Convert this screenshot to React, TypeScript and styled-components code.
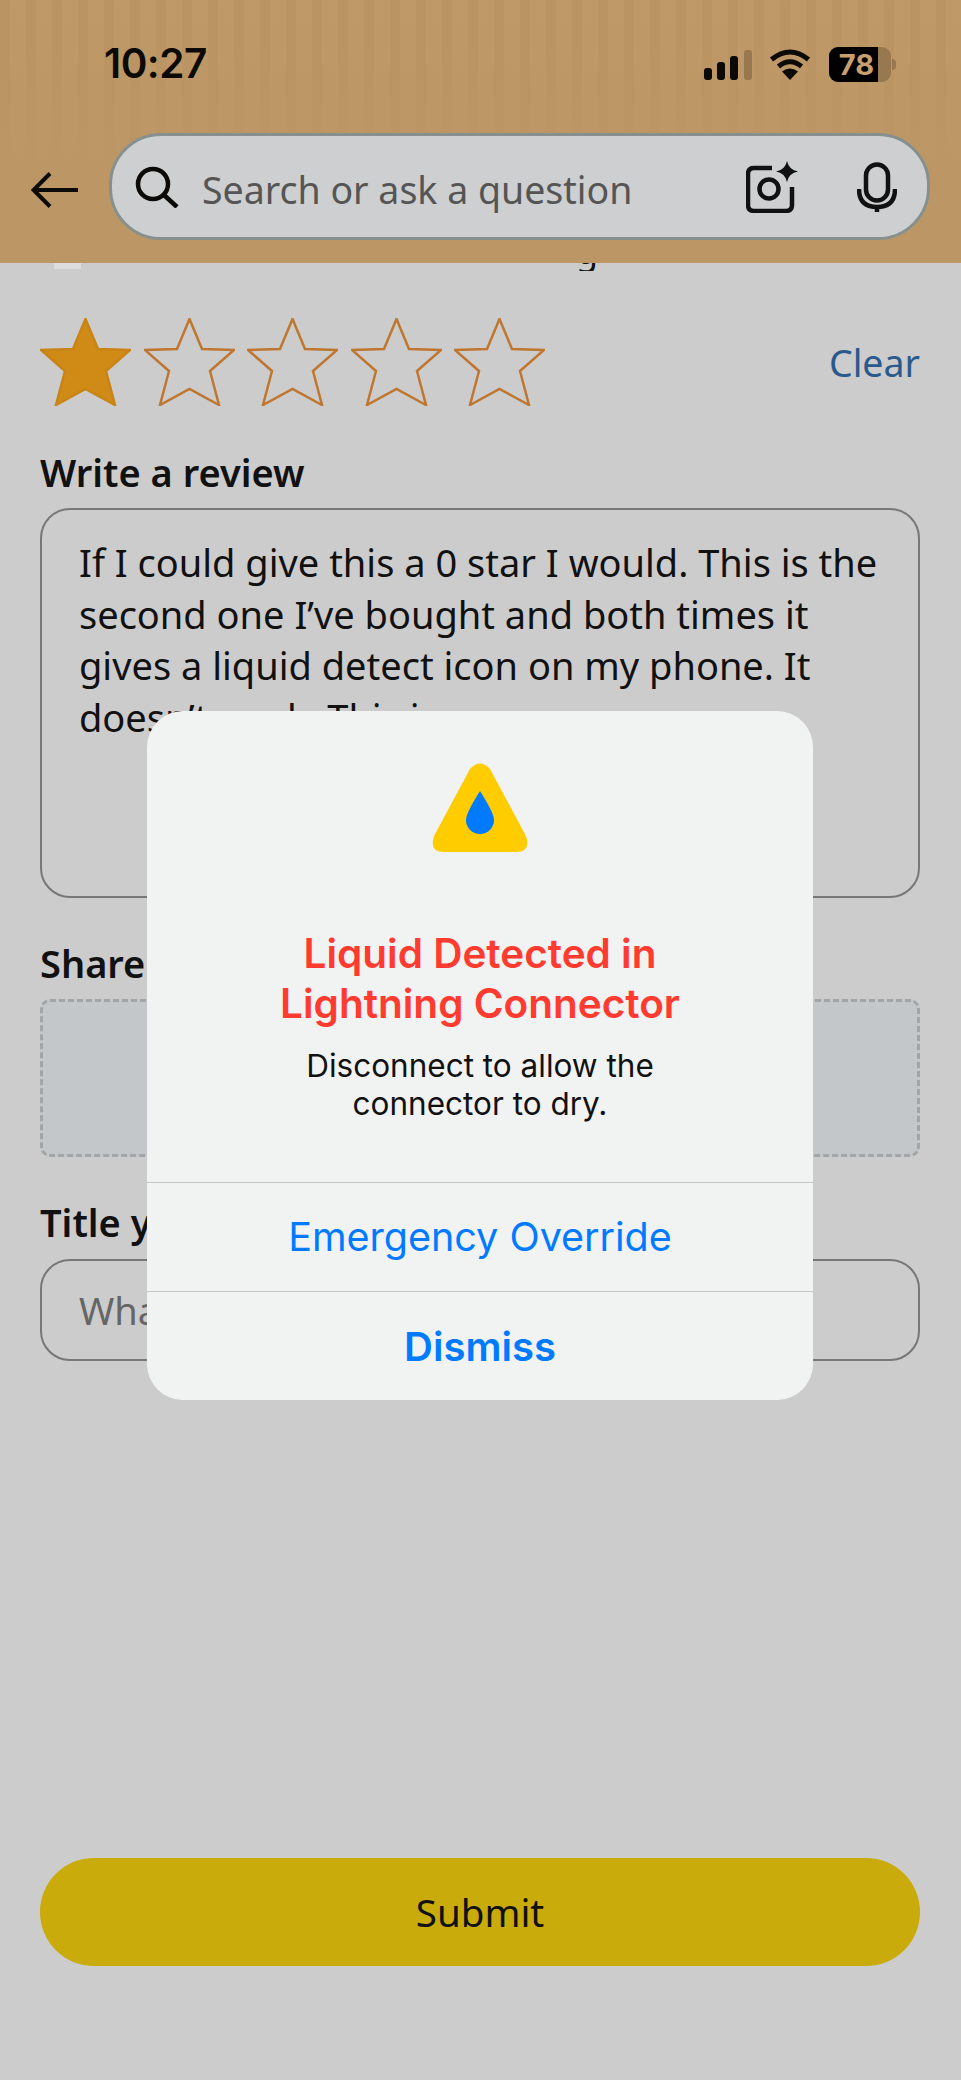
import styled, { createGlobalStyle } from 'styled-components';

const GlobalStyle = createGlobalStyle`
  html, body {
    margin: 0;
    padding: 0;
    background: #cccccc;
  }
  * {
    box-sizing: border-box;
  }
`;

const Page = styled.div`
  position: relative;
  width: 961px;
  height: 2080px;
  overflow: hidden;
  background: #cccccc;
  color: #111;
  font-family: 'Noto Sans', 'Liberation Sans', sans-serif;
`;

const Header = styled.header`
  height: 263px;
  background:
    linear-gradient(to bottom, rgba(189, 150, 101, 0.45) 0, #bd9665 170px),
    repeating-linear-gradient(90deg, #b8915f 0 10px, #c29b6b 10px 26px);
`;

const StatusBar = styled.div`
  height: 133px;
  padding: 40px 65px 0 104px;
  display: flex;
  justify-content: space-between;
  align-items: flex-start;
`;

const Time = styled.div`
  font-family: Inter, 'Liberation Sans', sans-serif;
  font-size: 40.500px;
  font-weight: 600;
  line-height: 48px;
  letter-spacing: -0.5px;
  color: #0c0a06;
`;

const StatusIcons = styled.div`
  display: flex;
  align-items: center;
  gap: 17px;
  padding-top: 7px;
`;

const Battery = styled.div`
  display: flex;
  align-items: stretch;
  width: 62px;
  height: 35px;
  border-radius: 9px;
  overflow: hidden;
  background: #98794f;
  position: relative;
`;

const BatteryFill = styled.div`
  width: 49px;
  background: #000;
  color: #c8a070;
  font-family: Inter, 'Liberation Sans', sans-serif;
  font-size: 29px;
  font-weight: 700;
  line-height: 35px;
  text-align: center;
  padding-left: 6px;
  white-space: nowrap;
`;

const BatteryTip = styled.div`
  width: 4px;
  height: 11px;
  margin-left: 1px;
  border-radius: 0 4px 4px 0;
  background: #98794f;
`;

const BatteryWrap = styled.div`
  display: flex;
  align-items: center;
  margin-left: 1px;
`;

const SearchRow = styled.div`
  display: flex;
  align-items: center;
  height: 107px;
  padding-left: 31px;
  gap: 31px;
`;

const BackSlot = styled.div`
  display: flex;
  padding-top: 6px;
`;

const SearchBox = styled.div`
  width: 821px;
  height: 107px;
  display: flex;
  align-items: center;
  border: 3px solid #86908f;
  border-radius: 52px;
  background: #cdcfd0;
  padding: 0 30px 0 23px;
`;

const Placeholder = styled.div`
  flex: 1;
  margin-left: 23px;
  padding-top: 6px;
  font-size: 37.500px;
  color: #555;
  white-space: nowrap;
`;

const CameraSlot = styled.div`
  margin-right: 59px;
  display: flex;
`;

const Content = styled.main`
  padding: 0 41px 0 40px;
`;

const Peek = styled.div`
  height: 8px;
  overflow: hidden;
  display: flex;
  padding-left: 14px;
`;

const PeekIcon = styled.div`
  width: 27px;
  height: 6px;
  background: #dcdcdc;
`;

const PeekLetter = styled.div`
  margin-left: 495px;
  margin-top: -32px;
  font-size: 36px;
  line-height: 40px;
`;

const RatingRow = styled.div`
  margin-top: 47px;
  height: 88px;
  display: flex;
  justify-content: space-between;
  align-items: flex-start;
`;

const Stars = styled.div`
  display: flex;
  gap: 12.500px;
`;

const ClearLink = styled.div`
  margin-top: 20px;
  font-size: 37.500px;
  line-height: 50px;
  color: #2a5a8c;
`;

const Label = styled.div`
  font-size: 38px;
  font-weight: 600;
  line-height: 50px;
  color: #111;
`;

const ReviewLabel = styled(Label)`
  margin-top: 41px;
`;

const ReviewBox = styled.div`
  margin-top: 11px;
  height: 390px;
  border: 2px solid #777;
  border-radius: 30px;
  padding: 27px 20px 0 37px;
  font-size: 38px;
  line-height: 51.700px;
  color: #111;
  white-space: nowrap;
`;

const ShareLabel = styled(Label)`
  margin-top: 40px;
`;

const DropZone = styled.div`
  margin-top: 11px;
  height: 158px;
  border: 3px dashed #a3a6a8;
  border-radius: 10px;
  background: #c3c7c9;
`;

const TitleLabel = styled(Label)`
  margin-top: 40px;
`;

const TitleInput = styled.div`
  margin-top: 12px;
  height: 102px;
  border: 2px solid #777;
  border-radius: 30px;
  padding-left: 37px;
  display: flex;
  align-items: center;
  font-size: 38px;
  color: #666;
`;

const SubmitButton = styled.div`
  margin-top: 497px;
  height: 108px;
  border-radius: 54px;
  background: #c9ab0c;
  display: flex;
  align-items: center;
  justify-content: center;
  font-size: 38.500px;
  color: #111;
`;

const Alert = styled.div`
  position: absolute;
  left: 147px;
  top: 711px;
  width: 666px;
  height: 689px;
  border-radius: 36px;
  background: #f1f2f2;
  font-family: Inter, 'Liberation Sans', sans-serif;
  text-align: center;
  display: flex;
  flex-direction: column;
  overflow: hidden;
`;

const AlertBody = styled.div`
  height: 471px;
  display: flex;
  flex-direction: column;
  align-items: center;
  padding-top: 52px;
`;

const AlertTitle = styled.div`
  margin-top: 76px;
  font-size: 40.500px;
  font-weight: 600;
  line-height: 50px;
  color: #ff3b30;
`;

const AlertMessage = styled.div`
  margin-top: 18px;
  font-size: 31.500px;
  line-height: 38px;
  color: #111;
`;

const AlertAction = styled.div<{ $bold?: boolean }>`
  flex: 1;
  display: flex;
  align-items: center;
  justify-content: center;
  border-top: 1.500px solid #c6c6c8;
  font-size: ${props => (props.$bold ? 40 : 39.500)}px;
  font-weight: ${props => (props.$bold ? 600 : 400)};
  color: #007aff;
`;

function Star({ filled }: { filled?: boolean }) {
  return (
    <svg width="91" height="88" viewBox="0 0 91 88">
      <polygon
        points="45.500,1 58,31 90,32 66,53 75,87 45.500,71 16,87 25,53 1,32 33,31"
        fill={filled ? '#d08a16' : 'none'}
        stroke={filled ? '#c98417' : '#bf7730'}
        strokeWidth="2.500"
      />
    </svg>
  );
}

function Signal() {
  return (
    <svg width="48" height="30" viewBox="0 0 48 30">
      <rect x="0" y="18" width="8" height="12" rx="3" fill="#0c0a06" />
      <rect x="13" y="12" width="8" height="18" rx="3" fill="#0c0a06" />
      <rect x="26" y="6" width="8" height="24" rx="3" fill="#0c0a06" />
      <rect x="40" y="0" width="8" height="30" rx="3" fill="#98794f" />
    </svg>
  );
}

function Wifi() {
  return (
    <svg width="42" height="31" viewBox="0 0 42 31" fill="none">
      <path d="M2.500 10.500 Q21 -4.500 39.500 10.500" stroke="#0c0a06" strokeWidth="5" />
      <path d="M9.500 17.500 Q21 8 32.500 17.500" stroke="#0c0a06" strokeWidth="5" />
      <path d="M21 31 L13 22.500 Q21 16.500 29 22.500 Z" fill="#0c0a06" />
    </svg>
  );
}

function BackArrow() {
  return (
    <svg width="47" height="36" viewBox="0 0 47 36" fill="none" stroke="#0c0a06" strokeWidth="4">
      <path d="M47 18 H3" />
      <path d="M19 1.500 L2.500 18 L19 34.500" />
    </svg>
  );
}

function SearchIcon() {
  return (
    <svg width="44" height="42" viewBox="0 0 44 42" fill="none" stroke="#0c0a06" strokeWidth="4.500">
      <circle cx="18" cy="18" r="15" />
      <path d="M29 29 L42 41" />
    </svg>
  );
}

function CameraIcon() {
  return (
    <svg width="52" height="52" viewBox="0 0 52 52" fill="none">
      <path
        d="M26 7 H8 Q2 7 2 13 V44 Q2 50 8 50 H40 Q46 50 46 44 V26"
        stroke="#111"
        strokeWidth="4.500"
      />
      <circle cx="23" cy="28" r="9.500" stroke="#111" strokeWidth="4.500" />
      <path d="M41 0 Q43 9 52 10.500 Q43 12 41 21 Q39 12 30 10.500 Q39 9 41 0 Z" fill="#111" />
    </svg>
  );
}

function MicIcon() {
  return (
    <svg width="40" height="50" viewBox="0 0 40 50" fill="none" stroke="#111" strokeWidth="4.500">
      <rect x="9" y="2.500" width="22" height="36" rx="11" />
      <path d="M2 27 Q2 45 20 45 Q38 45 38 27" />
      <path d="M20 45 V50" />
    </svg>
  );
}

function LiquidIcon() {
  return (
    <svg width="96" height="90" viewBox="0 0 96 90">
      <path
        d="M38 6 Q48 -5 58 6 L94 73 Q99 89 84 89 H12 Q-3 89 2 73 Z"
        fill="#ffcc00"
      />
      <path d="M48 28 Q62 50 62 57 A14 14 0 0 1 34 57 Q34 50 48 28 Z" fill="#007aff" />
    </svg>
  );
}

export default function App() {
  return (
    <>
      <GlobalStyle />
      <Page>
        <Header>
          <StatusBar>
            <Time>10:27</Time>
            <StatusIcons>
              <Signal />
              <Wifi />
              <BatteryWrap>
                <Battery>
                  <BatteryFill>78</BatteryFill>
                </Battery>
                <BatteryTip />
              </BatteryWrap>
            </StatusIcons>
          </StatusBar>
          <SearchRow>
            <BackSlot>
              <BackArrow />
            </BackSlot>
            <SearchBox>
              <SearchIcon />
              <Placeholder>Search or ask a question</Placeholder>
              <CameraSlot>
                <CameraIcon />
              </CameraSlot>
              <MicIcon />
            </SearchBox>
          </SearchRow>
        </Header>

        <Content>
          <Peek>
            <PeekIcon />
            <PeekLetter>g</PeekLetter>
          </Peek>
          <RatingRow>
            <Stars>
              <Star filled />
              <Star />
              <Star />
              <Star />
              <Star />
            </Stars>
            <ClearLink>Clear</ClearLink>
          </RatingRow>

          <ReviewLabel>Write a review</ReviewLabel>
          <ReviewBox>
            If I could give this a 0 star I would. This is the
            <br />
            second one I’ve bought and both times it
            <br />
            gives a liquid detect icon on my phone. It
            <br />
            doesn’t work. This is
          </ReviewBox>

          <ShareLabel>Share a video or photo</ShareLabel>
          <DropZone />

          <TitleLabel>Title your review</TitleLabel>
          <TitleInput>What’s most important to know?</TitleInput>

          <SubmitButton>Submit</SubmitButton>
        </Content>

        <Alert>
          <AlertBody>
            <LiquidIcon />
            <AlertTitle>
              Liquid Detected in
              <br />
              Lightning Connector
            </AlertTitle>
            <AlertMessage>
              Disconnect to allow the
              <br />
              connector to dry.
            </AlertMessage>
          </AlertBody>
          <AlertAction>Emergency Override</AlertAction>
          <AlertAction $bold>Dismiss</AlertAction>
        </Alert>
      </Page>
    </>
  );
}
